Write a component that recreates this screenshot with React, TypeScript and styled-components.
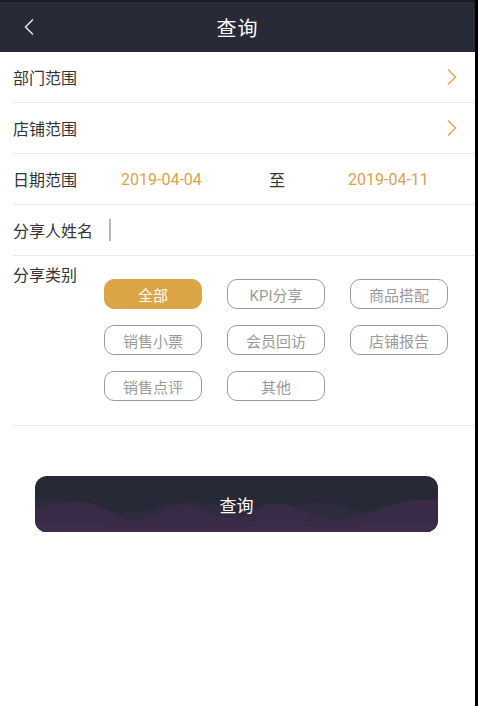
import React from 'react';
import styled, { createGlobalStyle } from 'styled-components';

const GlobalStyle = createGlobalStyle`
  html, body {
    margin: 0;
    padding: 0;
    background: #000;
  }
  body {
    font-family: Roboto, "Noto Sans CJK SC", "Noto Sans", sans-serif;
  }
`;

const Page = styled.div`
  width: 475px;
  min-height: 100vh;
  background: #fff;
  display: flex;
  flex-direction: column;
`;

const TopStrip = styled.div`
  height: 2px;
  background: #1b1c22;
`;

const NavBar = styled.header`
  height: 50px;
  background: #282a37;
  display: flex;
  align-items: center;
  position: relative;
  justify-content: center;
`;

const BackButton = styled.button`
  position: absolute;
  left: 18px;
  top: 13px;
  width: 22px;
  height: 24px;
  border: 0;
  padding: 0;
  background: none;
  display: flex;
  align-items: center;
  justify-content: center;
`;

const Title = styled.h1`
  margin: 0;
  color: #fff;
  font-size: 20px;
  font-weight: 400;
  letter-spacing: 1px;
`;

const Row = styled.div`
  height: 50px;
  margin-left: 13px;
  border-bottom: 1px solid #e8e8e8;
  display: flex;
  align-items: center;
  padding-right: 17px;
`;

const Label = styled.span`
  font-size: 16px;
  color: #333;
  width: 96px;
  flex-shrink: 0;
`;

const Spacer = styled.div`
  flex: 1;
`;

const DateValue = styled.span<{ $first?: boolean }>`
  font-size: 16px;
  color: #dca24a;
  flex-shrink: 0;
  width: ${p => (p.$first ? '148px' : 'auto')};
  margin-left: ${p => (p.$first ? '12px' : '0')};
`;

const DateSep = styled.span`
  font-size: 16px;
  color: #333;
  width: 79px;
  flex-shrink: 0;
`;

const Cursor = styled.span`
  width: 2px;
  height: 22px;
  background: #b5b5b5;
`;

const CategorySection = styled.div`
  margin-left: 13px;
  border-bottom: 1px solid #e8e8e8;
  display: flex;
  padding: 11px 0 24px;
`;

const CategoryLabel = styled.span`
  font-size: 16px;
  color: #333;
  width: 91px;
  line-height: 18px;
  flex-shrink: 0;
`;

const ChipGrid = styled.div`
  margin-top: 12px;
  display: grid;
  grid-template-columns: repeat(3, 98px);
  column-gap: 25px;
  row-gap: 16px;
`;

const Chip = styled.button<{ $active?: boolean }>`
  height: 30px;
  box-sizing: border-box;
  border-radius: 10px;
  border: 1px solid ${p => (p.$active ? '#dba445' : '#9a9a9a')};
  background: ${p => (p.$active ? '#dba445' : '#fff')};
  color: ${p => (p.$active ? '#fff' : '#999')};
  font-family: Roboto, "Noto Sans CJK SC", sans-serif;
  font-size: 15px;
  padding: 0;
  display: flex;
  align-items: center;
  justify-content: center;
`;

const SubmitWrap = styled.div`
  padding: 50px 37px 0 35px;
`;

const SubmitButton = styled.button`
  position: relative;
  width: 100%;
  height: 56px;
  border: 0;
  border-radius: 12px;
  overflow: hidden;
  background: #272936;
  color: #fff;
  font-family: Roboto, "Noto Sans CJK SC", sans-serif;
  font-size: 17px;
  padding: 0;
  display: flex;
  align-items: center;
  justify-content: center;
`;

const Waves = styled.svg`
  position: absolute;
  left: 0;
  top: 0;
  width: 100%;
  height: 100%;
`;

const ButtonText = styled.span`
  position: relative;
`;

const Chevron = ({ color, dir }: { color: string; dir: 'left' | 'right' }) => (
  <svg width="12" height="18" viewBox="0 0 12 18">
    <path
      d={dir === 'right' ? 'M2 1.5 L9.5 9 L2 16.5' : 'M10 1.5 L2.5 9 L10 16.5'}
      fill="none"
      stroke={color}
      strokeWidth="1.5"
    />
  </svg>
);

const categories = ['全部', 'KPI分享', '商品搭配', '销售小票', '会员回访', '店铺报告', '销售点评', '其他'];

export default function App() {
  return (
    <Page>
      <GlobalStyle />
      <TopStrip />
      <NavBar>
        <BackButton>
          <Chevron color="#e6e6e6" dir="left" />
        </BackButton>
        <Title>查询</Title>
      </NavBar>
      <Row>
        <Label>部门范围</Label>
        <Spacer />
        <Chevron color="#e0a84f" dir="right" />
      </Row>
      <Row>
        <Label>店铺范围</Label>
        <Spacer />
        <Chevron color="#e0a84f" dir="right" />
      </Row>
      <Row>
        <Label>日期范围</Label>
        <DateValue $first>2019-04-04</DateValue>
        <DateSep>至</DateSep>
        <DateValue>2019-04-11</DateValue>
      </Row>
      <Row>
        <Label>分享人姓名</Label>
        <Cursor />
      </Row>
      <CategorySection>
        <CategoryLabel>分享类别</CategoryLabel>
        <ChipGrid>
          {categories.map((c, i) => (
            <Chip key={c} $active={i === 0}>
              {c}
            </Chip>
          ))}
        </ChipGrid>
      </CategorySection>
      <SubmitWrap>
        <SubmitButton>
          <Waves viewBox="0 0 403 56" preserveAspectRatio="none">
            <path
              d="M0 23 C12 23 25 25 40 28 C60 32 75 38 95 37 C115 36 130 26 155 26 C180 26 195 36 215 37 C240 38 255 28 280 27 C305 26 320 37 340 37 C360 37 380 28 403 24 L403 56 L0 56 Z"
              fill="#302b40"
              opacity="0.9"
            />
            <path
              d="M0 34 C15 29 28 26 45 26 C68 26 82 44 102 44 C122 44 130 29 148 29 C168 29 178 42 195 42 C215 42 222 27 240 27 C262 27 280 44 300 44 C325 44 345 28 380 24 C392 23 398 24 403 25 L403 56 L0 56 Z"
              fill="#3b2c49"
              opacity="0.85"
            />
            <path
              d="M0 48 C40 47 80 50 120 49 C170 48 220 51 270 50 C320 49 370 47 403 48 L403 56 L0 56 Z"
              fill="#3d2d4a"
            />
          </Waves>
          <ButtonText>查询</ButtonText>
        </SubmitButton>
      </SubmitWrap>
    </Page>
  );
}
